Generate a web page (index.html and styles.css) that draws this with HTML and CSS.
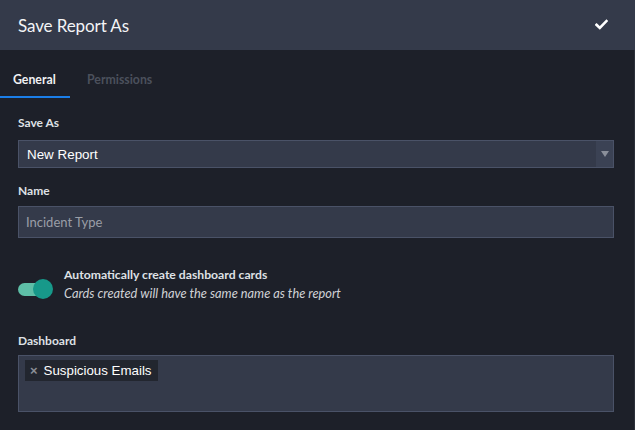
FILE: index.html
```html
<!DOCTYPE html>
<html>
<head>
<meta charset="utf-8">
<link rel="stylesheet" href="styles.css">
</head>
<body>
<div class="dialog">
  <header class="header">
    <h1 class="title">Save Report As</h1>
    <svg class="check" width="13" height="11" viewBox="0 0 13 11"><path d="M1.5 5.8 L4.8 9 L11.5 2" fill="none" stroke="#ffffff" stroke-width="2.6" stroke-linecap="square"/></svg>
  </header>
  <main class="main">
    <nav class="tabs">
      <div class="tab active">General</div>
      <div class="tab">Permissions</div>
    </nav>
    <section class="content">
      <div class="label l-save">Save As</div>
      <div class="select">
        <span class="select-value">New Report</span>
        <span class="select-btn"><svg width="8" height="6" viewBox="0 0 8 6"><path d="M0 0 H8 L4 6 Z" fill="#8a8f9a"/></svg></span>
      </div>
      <div class="label l-name">Name</div>
      <div class="input">Incident Type</div>
      <div class="toggle-row">
        <div class="toggle"><span class="track"></span><span class="knob"></span></div>
        <div class="toggle-text">
          <div class="toggle-title">Automatically create dashboard cards</div>
          <div class="toggle-sub">Cards created will have the same name as the report</div>
        </div>
      </div>
      <div class="label l-dash">Dashboard</div>
      <div class="multi">
        <span class="tag"><span class="tag-x">×</span>Suspicious Emails</span>
      </div>
    </section>
  </main>
</div>
</body>
</html>
```
FILE: styles.css
```css
html, body {
  margin: 0;
  padding: 0;
  background: #1d2029;
}
body {
  width: 635px;
  height: 430px;
  overflow: hidden;
  font-family: Lato, "Noto Sans", sans-serif;
  color: #e6e7ea;
}
.dialog {
  display: flex;
  flex-direction: column;
  height: 430px;
}
.header {
  height: 50px;
  background: #343a4a;
  display: flex;
  align-items: center;
  justify-content: space-between;
  padding: 0 27px 0 18px;
  flex: none;
}
.title {
  margin: 0;
  font-size: 17px;
  font-weight: 400;
  color: #f3f4f6;
  letter-spacing: -0.1px;
}
.check {
  display: block;
  margin-top: -1px;
}
.main {
  flex: 1;
  border-right: 1px solid #2b2f39;
}
.tabs {
  display: flex;
  height: 48px;
}
.tab {
  display: flex;
  align-items: center;
  padding: 12px 15px 0 13px;
  font-size: 12.3px;
  font-weight: 700;
  color: #4b505c;
  border-bottom: 2px solid transparent;
  box-sizing: border-box;
  height: 48px;
}
.tab.active {
  color: #f0f1f3;
  border-bottom-color: #1b7ee8;
  width: 70px;
  padding-right: 0;
}
.tab + .tab {
  padding-left: 17px;
}
.content {
  padding: 0 20px 0 18px;
  display: flex;
  flex-direction: column;
}
.label {
  font-size: 12px;
  font-weight: 700;
  line-height: 16px;
  color: #dfe1e5;
}
.l-save { margin-top: 17px; margin-bottom: 9px; }
.l-name { margin-top: 15px; margin-bottom: 7px; }
.l-dash { margin-top: 30px; margin-bottom: 6px; }
.select {
  height: 28px;
  box-sizing: border-box;
  border: 1px solid #4a5267;
  background: #343a4a;
  display: flex;
  align-items: stretch;
}
.select-value {
  flex: 1;
  display: flex;
  align-items: center;
  padding-left: 8px;
  font-family: "Liberation Sans", Arial, sans-serif;
  font-size: 13.4px;
  color: #ffffff;
}
.select-btn {
  width: 17px;
  background: #3b4254;
  display: flex;
  align-items: center;
  justify-content: center;
}
.input {
  height: 32px;
  box-sizing: border-box;
  border: 1px solid #4a5267;
  background: #343a4a;
  display: flex;
  align-items: center;
  padding-left: 7px;
  font-size: 13px;
  color: #9a9ea7;
}
.toggle-row {
  display: flex;
  align-items: flex-start;
  margin-top: 28px;
}
.toggle {
  position: relative;
  width: 35px;
  height: 22px;
  margin-top: 13px;
  flex: none;
}
.track {
  position: absolute;
  left: 0;
  top: 4px;
  width: 26px;
  height: 13px;
  border-radius: 7px;
  background: #5ebfa7;
}
.knob {
  position: absolute;
  left: 15px;
  top: 0;
  width: 20px;
  height: 20px;
  border-radius: 50%;
  background: #17998a;
}
.toggle-text {
  margin-left: 11px;
  display: flex;
  flex-direction: column;
}
.toggle-title {
  font-size: 12.2px;
  font-weight: 700;
  line-height: 18px;
  color: #dfe1e5;
}
.toggle-sub {
  font-size: 12.8px;
  font-style: italic;
  line-height: 19px;
  color: #d0d2d6;
}
.multi {
  height: 57px;
  box-sizing: border-box;
  border: 1px solid #4a5267;
  background: #343a4a;
  padding: 4px 6px;
  display: flex;
  align-items: flex-start;
}
.tag {
  display: inline-flex;
  align-items: center;
  height: 21px;
  padding: 0 6px 0 5px;
  background: #22262f;
  font-family: "Liberation Sans", Arial, sans-serif;
  font-size: 13.3px;
  color: #ffffff;
}
.tag-x {
  color: #8b8e95;
  font-size: 13px;
  font-weight: 700;
  margin-right: 6px;
}
```
